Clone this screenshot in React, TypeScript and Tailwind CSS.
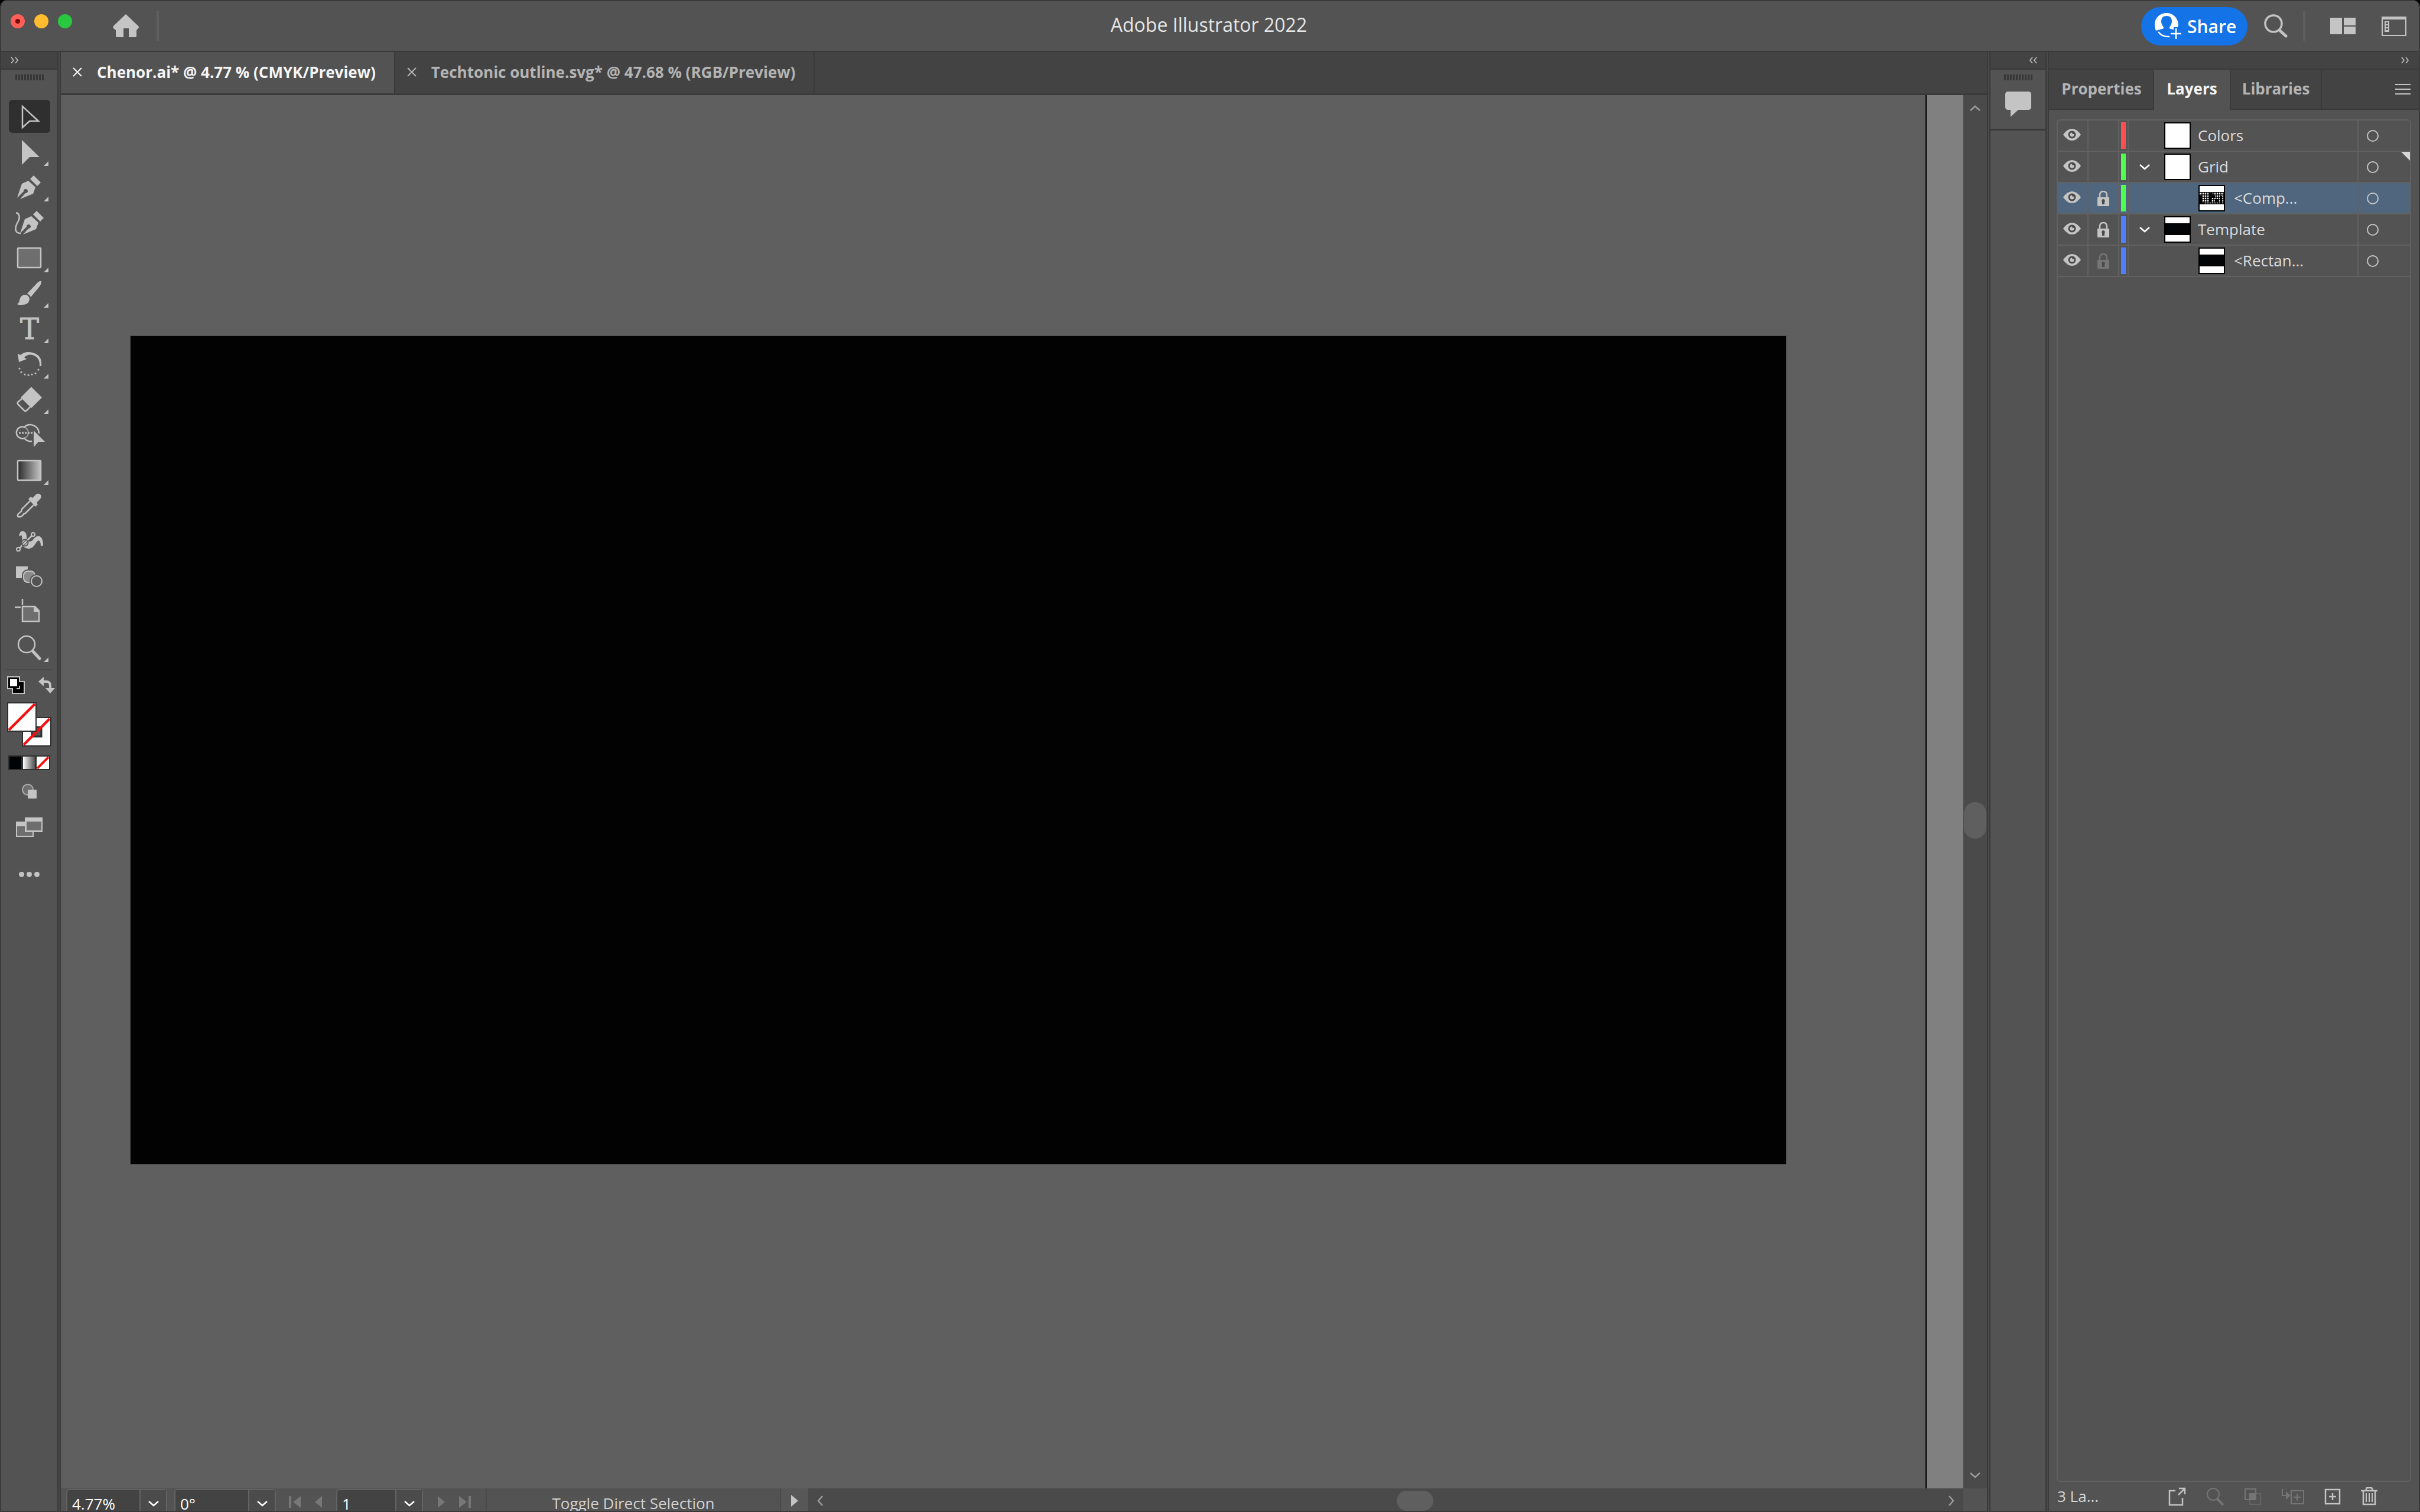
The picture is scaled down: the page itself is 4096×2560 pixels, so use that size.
import type { ReactNode } from "react";

const ICON = "#c4c4c4";

const Nib = () => (
  <>
    <path fill={ICON} d="M14 46 22 22 33 17 45 28 41 39 19 48 28 38a3.5 3.5 0 1 0-3-3z" />
    <path fill={ICON} d="M42 8 54 20 48 26 36 14z" />
  </>
);

const tools: { name: string; more?: boolean; icon: ReactNode }[] = [
  {
    name: "Selection",
    icon: <path d="M23 11V47L35 36H50z" fill="none" stroke={ICON} strokeWidth="2.5" />,
  },
  {
    name: "Direct Selection",
    more: true,
    icon: <path d="M22 8V50L35 37H52z" fill={ICON} />,
  },
  { name: "Pen", more: true, icon: <Nib /> },
  {
    name: "Curvature",
    icon: (
      <>
        <g transform="translate(5 0)">
          <Nib />
        </g>
        <path
          d="M12 11C19 13 19 20 15 27C10 36 9 46 20 46"
          fill="none"
          stroke={ICON}
          strokeWidth="2.5"
        />
      </>
    ),
  },
  {
    name: "Rectangle",
    more: true,
    icon: <rect x="15" y="11" width="39" height="33" rx="1" fill="#6e6e6e" stroke={ICON} strokeWidth="2.5" />,
  },
  {
    name: "Paintbrush",
    more: true,
    icon: (
      <>
        <path d="M31 28 49 9Q55 5 55 8Q55 12 52 16L37 34Q35 30 31 28z" fill={ICON} />
        <path d="M14 46Q18 43 18 39Q20 30 28 30Q34 31 35 37Q34 47 23 47Q17 48 14 46z" fill={ICON} />
      </>
    ),
  },
  {
    name: "Type",
    more: true,
    icon: (
      <text x="35" y="45" textAnchor="middle" fontFamily="DejaVu Serif, serif" fontSize="48" fill={ICON} stroke={ICON}>
        T
      </text>
    ),
  },
  {
    name: "Rotate",
    more: true,
    icon: (
      <>
        <path d="M15 10 17 24 30 19 26 16Q32 10 40 12Q53 16 52 31H55Q57 12 40 8Q28 5 20 12z" fill={ICON} />
        <g fill={ICON}>
          <circle cx="18" cy="35" r="1.6" />
          <circle cx="21" cy="41" r="1.6" />
          <circle cx="27" cy="45" r="1.6" />
          <circle cx="33" cy="46" r="1.6" />
          <circle cx="39" cy="45" r="1.6" />
          <circle cx="45" cy="43" r="1.6" />
          <circle cx="50" cy="37" r="1.6" />
        </g>
      </>
    ),
  },
  {
    name: "Eraser",
    more: true,
    icon: (
      <>
        <path d="M38 6 56 24 38 42 20 24z" fill={ICON} />
        <path d="M22 26 15 32Q14 34 16 36L26 46Q28 48 30 46L36 40" fill="none" stroke={ICON} strokeWidth="2.5" />
      </>
    ),
  },
  {
    name: "Shape Builder",
    icon: (
      <>
        <path d="M26 14a10 10 0 0 1 0 19" fill="none" stroke="#8f8f8f" strokeWidth="2.5" />
        <path
          d="M51 25A15 15 0 0 0 26 14A10 10 0 1 0 26 33Q31 39 39 38"
          fill="none"
          stroke={ICON}
          strokeWidth="2.5"
        />
        <path d="M17 24H40" stroke={ICON} strokeWidth="3" strokeDasharray="3 2" />
        <path d="M42 20V48L50 39H61z" fill={ICON} />
      </>
    ),
  },
  {
    name: "Gradient",
    more: true,
    icon: (
      <>
        <defs>
          <linearGradient id="toolGradient">
            <stop offset="0" stopColor="#2b2b2b" />
            <stop offset="1" stopColor={ICON} />
          </linearGradient>
        </defs>
        <rect x="15" y="11" width="39" height="33" rx="1" fill="url(#toolGradient)" stroke={ICON} strokeWidth="2.5" />
      </>
    ),
  },
  {
    name: "Eyedropper",
    icon: (
      <>
        <path
          d="M36 19 22 33Q21 35 21 37Q14 41 15 45Q18 48 23 44Q24 41 28 40L42 26"
          fill="none"
          stroke={ICON}
          strokeWidth="2.5"
        />
        <path d="M33 16 37 12 40 14 46 8Q51 5 54 9Q56 13 52 17L47 22 49 25 45 29z" fill={ICON} />
      </>
    ),
  },
  {
    name: "Puppet Warp",
    icon: (
      <>
        <path
          d="M17 19Q18 10 24 10Q30 12 30 20Q31 28 36 28Q40 27 43 22Q47 18 52 19Q58 21 58 35L54 35Q54 27 50 26Q47 28 44 33Q40 40 33 40Q23 39 22 30Q23 19 21 17z"
          fill={ICON}
        />
        <path d="M18 39 39 18" stroke="#535353" strokeWidth="5" />
        <path d="M18 39 39 18" stroke={ICON} strokeWidth="2.5" />
        <circle cx="27" cy="30" r="5.5" fill="none" stroke="#535353" strokeWidth="2" />
        <circle cx="41" cy="16" r="3" fill="#535353" stroke={ICON} strokeWidth="2" />
        <circle cx="16" cy="41" r="3" fill="#535353" stroke={ICON} strokeWidth="2" />
      </>
    ),
  },
  {
    name: "Blend",
    icon: (
      <>
        <path d="M12 10H32V30H12z" fill={ICON} />
        <rect x="25" y="18" width="19" height="19" rx="7" fill="#8b8b8b" stroke="#535353" strokeWidth="6" />
        <rect x="25" y="18" width="19" height="19" rx="7" fill="#8b8b8b" stroke={ICON} strokeWidth="2" />
        <circle cx="47" cy="35" r="9" fill="#535353" stroke="#535353" strokeWidth="6" />
        <circle cx="47" cy="35" r="9" fill="#535353" stroke={ICON} strokeWidth="2" />
      </>
    ),
  },
  {
    name: "Artboard",
    icon: (
      <>
        <path d="M23 5V15M10 19H20" stroke={ICON} strokeWidth="2.5" />
        <path d="M23 18H44L51 25V43H23z" fill="#6e6e6e" stroke={ICON} strokeWidth="2.5" />
        <path d="M42 18V27H51V25L44 18z" fill={ICON} />
      </>
    ),
  },
  {
    name: "Zoom",
    more: true,
    icon: (
      <>
        <circle cx="30" cy="22" r="14" fill="none" stroke={ICON} strokeWidth="2.5" />
        <path d="M41 34 52 46" stroke={ICON} strokeWidth="5" strokeLinecap="round" />
      </>
    ),
  },
];

type Layer = {
  name: string;
  color: string;
  lock?: "on" | "inherited";
  open?: boolean;
  child?: boolean;
  selected?: boolean;
  current?: boolean;
  thumb: "blank" | "grid" | "bar";
};

const layers: Layer[] = [
  { name: "Colors", color: "bg-[#ff4f52]", thumb: "blank" },
  { name: "Grid", color: "bg-[#4fff4f]", open: true, current: true, thumb: "blank" },
  { name: "<Comp...", color: "bg-[#4fff4f]", lock: "on", child: true, selected: true, thumb: "grid" },
  { name: "Template", color: "bg-[#4f80ff]", lock: "on", open: true, thumb: "bar" },
  { name: "<Rectan...", color: "bg-[#4f80ff]", lock: "inherited", child: true, thumb: "bar" },
];

const Chevrons = ({ flip = false }: { flip?: boolean }) => (
  <svg width="14" height="12" viewBox="0 0 14 12" className={flip ? "rotate-180" : ""}>
    <path d="M1 1 5 6 1 11M8 1 12 6 8 11" fill="none" stroke="#c4c4c4" strokeWidth="1.6" />
  </svg>
);

const Chevron = ({ className = "" }: { className?: string }) => (
  <svg width="20" height="12" viewBox="0 0 20 12" className={className}>
    <path d="M2 2 10 9 18 2" fill="none" stroke="currentColor" strokeWidth="2.5" />
  </svg>
);

const Grip = () => (
  <svg width="48" height="10" viewBox="0 0 48 10" shapeRendering="crispEdges">
    <path d="M0 5H48" stroke="#363636" strokeWidth="10" strokeDasharray="3 2" />
  </svg>
);

const Divider = () => <span className="h-[50px] w-1 bg-[#5f5f5f]" />;

const Gutter = () => <div className="w-1.5 shrink-0 border-x-2 border-[#3a3a3a] bg-[#4a4a4a]" />;

const TitleBar = () => (
  <header className="grid h-[88px] shrink-0 grid-cols-[1fr_auto_1fr] items-center border-y-2 border-[#3a3a3a] bg-[#535353]">
    <div className="flex items-center pl-4">
      <div className="flex gap-4 pb-4">
        <button aria-label="Close" className="flex size-6 items-center justify-center rounded-full bg-[#ff5f57]">
          <span className="size-2 rounded-full bg-[#7a0a05]" />
        </button>
        <button aria-label="Minimize" className="size-6 rounded-full bg-[#febc2e]" />
        <button aria-label="Full screen" className="size-6 rounded-full bg-[#28c840]" />
      </div>
      <button aria-label="Home" className="ml-[69px]">
        <svg width="44" height="40" viewBox="0 0 44 40">
          <path
            fill={ICON}
            d="M22 0 43 20Q45 22 43 24L40 27V37Q40 39 38 39H27V24H18V39H7Q5 39 5 37V27L1 24Q0 22 1 20z"
          />
        </svg>
      </button>
      <span className="ml-[30px] flex">
        <Divider />
      </span>
    </div>
    <h1 className="pr-1 pb-1 text-[32px] leading-10 text-[#e6e6e6]">Adobe Illustrator 2022</h1>
    <div className="flex items-center justify-end pr-[21px]">
      <button className="flex h-[65px] w-[180px] items-center gap-2.5 rounded-full bg-[#1473e6] pl-[22px] text-[30px] font-semibold text-white">
        <svg width="46" height="46" viewBox="0 0 46 46">
          <path
            fill="#fff"
            d="M21 1C9 1 1 10 1 21C1 25 2 28 3 31Q9 29 14 28Q17 27 16 25Q12 20 12 15Q12 6 21 6T30 15Q30 20 26 25Q25 27 28 28L33 29V25H40Q41 22 41 20C40 9 32 1 21 1z"
          />
          <path d="M7 33Q14 42 26 41M37 27V45M28 36H46" fill="none" stroke="#fff" strokeWidth="2.5" />
        </svg>
        Share
      </button>
      <button aria-label="Search" className="ml-7">
        <svg width="40" height="40" viewBox="0 0 40 40">
          <circle cx="16" cy="16" r="14" fill="none" stroke={ICON} strokeWidth="3.5" />
          <path d="M26 27 37 37" stroke={ICON} strokeWidth="5" strokeLinecap="round" />
        </svg>
      </button>
      <span className="ml-[26px] flex">
        <Divider />
      </span>
      <button aria-label="Arrange documents" className="ml-[42px]">
        <svg width="43" height="28" viewBox="0 0 43 28">
          <path fill={ICON} d="M0 0H20V28H0zM23 0H43V13H23zM23 15H43V28H23z" />
        </svg>
      </button>
      <button aria-label="Switch workspace" className="ml-11">
        <svg width="42" height="33" viewBox="0 0 42 33">
          <path fill="none" stroke={ICON} strokeWidth="2" d="M1 1H41V32H1z" />
          <path fill={ICON} d="M0 0H42V5H0zM5 8H13V26H5z" />
          <path fill="#535353" d="M7 10H11V13H7zM7 15H11V18H7zM7 20H11V23H7z" />
        </svg>
      </button>
    </div>
  </header>
);

const Toolbar = () => (
  <aside className="flex w-[95px] shrink-0 flex-col bg-[#535353]">
    <div className="flex h-[30px] shrink-0 items-center border-b-2 border-[#3a3a3a] bg-[#434343] pl-4">
      <Chevrons />
    </div>
    <div className="mt-2 flex h-[43px] justify-center">
      <Grip />
    </div>
    <div className="flex flex-col items-center gap-1">
      {tools.map((tool, i) => (
        <button
          key={tool.name}
          aria-label={tool.name}
          className={i === 0 ? "h-14 w-[70px] rounded-md bg-[#2f2f2f]" : "h-14 w-[70px]"}
        >
          <svg width="70" height="56" viewBox="0 0 70 56" className="overflow-visible">
            {tool.icon}
            {tool.more && <path d="M59 52 67 44V52z" fill={ICON} />}
          </svg>
        </button>
      ))}
    </div>
    <div className="mx-2 mt-2 h-0.5 bg-[#4a4a4a]" />
    <div className="mt-2.5 flex justify-between pr-1 pl-2.5">
      <button aria-label="Default fill and stroke">
        <svg width="30" height="30" viewBox="0 0 30 30">
          <path fill={ICON} d="M0 0H22V8H30V30H8V22H0z" />
          <path fill="#000" d="M2 2H20V20H2zM10 20H20V10H28V28H10z" />
          <path fill="#fff" d="M5 5H17V17H5z" />
          <path fill="none" stroke="#c4c4c4" strokeWidth="2" d="M21 16V21H16" />
        </svg>
      </button>
      <button aria-label="Swap fill and stroke">
        <svg width="28" height="30" viewBox="0 0 28 30">
          <path d="M7 9H13Q20 9 20 16V21" fill="none" stroke={ICON} strokeWidth="4" />
          <path fill={ICON} d="M0 9 9 1V17zM12 20H28L20 29z" />
        </svg>
      </button>
    </div>
    <button aria-label="Fill and stroke" className="mt-[14px] ml-2.5 w-[75px]">
      <svg width="75" height="75" viewBox="0 0 75 75">
        <path fill="#fff" stroke="#2f2f2f" strokeWidth="2" d="M26 26H74V74H26z" />
        <path fill="#535353" stroke="#2f2f2f" strokeWidth="3" d="M42 42H58V58H42z" />
        <path stroke="#f60d0d" strokeWidth="4.5" d="M28 72 72 28" />
        <path fill="#fff" stroke="#2f2f2f" strokeWidth="2" d="M1 1H49V49H1z" />
        <path stroke="#f60d0d" strokeWidth="4.5" d="M3 47 47 3" />
      </svg>
    </button>
    <div className="mt-[15px] ml-3 flex h-[25px] w-[71px] gap-[3px] bg-[#2f2f2f] p-0.5">
      <button aria-label="Color" className="flex-1 bg-[#020304]" />
      <button aria-label="Gradient fill" className="flex-1 bg-linear-to-r from-white to-[#535353]" />
      <button aria-label="None" className="flex-1">
        <svg width="21" height="21" viewBox="0 0 21 21">
          <path fill="#fff" d="M0 0H21V21H0z" />
          <path stroke="#f60d0d" strokeWidth="4" d="M1 20 20 1" />
        </svg>
      </button>
    </div>
    <button aria-label="Drawing modes" className="mt-[23px] ml-[35px] w-[26px]">
      <svg width="26" height="26" viewBox="0 0 26 26">
        <circle cx="10" cy="10" r="9" fill="#6e6e6e" stroke="#b0b0b0" strokeWidth="2" />
        <rect x="10" y="10" width="15" height="15" rx="1" fill={ICON} />
      </svg>
    </button>
    <button aria-label="Screen mode" className="mt-[31px] ml-[25px] w-[45px]">
      <svg width="45" height="33" viewBox="0 0 45 33">
        <path fill={ICON} d="M0 7H30V33H0z" />
        <path fill="#6e6e6e" d="M2 15H28V31H2z" />
        <path fill={ICON} d="M15 0H45V25H15z" />
        <path fill="#6e6e6e" d="M18 7H43V22H18z" />
      </svg>
    </button>
    <button aria-label="Edit toolbar" className="mt-[59px] ml-[30px] flex gap-1">
      <span className="size-[9px] rounded-full bg-[#c4c4c4]" />
      <span className="size-[9px] rounded-full bg-[#c4c4c4]" />
      <span className="size-[9px] rounded-full bg-[#c4c4c4]" />
    </button>
  </aside>
);

const CloseIcon = () => (
  <svg width="16" height="16" viewBox="0 0 16 16">
    <path d="M1 1 15 15M15 1 1 15" stroke="currentColor" strokeWidth="2" />
  </svg>
);

const DocumentTabs = () => (
  <nav className="flex h-[73px] shrink-0 border-b-3 border-[#3a3a3a] bg-[#434343] text-[26px] font-bold">
    <div className="flex items-center gap-[25px] border-r-2 border-[#3a3a3a] bg-[#535353] pr-[31px] pb-0.5 pl-5 text-[#f5f5f5]">
      <button aria-label="Close Chenor.ai">
        <CloseIcon />
      </button>
      <a href="#chenor">Chenor.ai* @ 4.77 % (CMYK/Preview)</a>
    </div>
    <div className="flex items-center gap-[25px] border-r-2 border-[#3a3a3a] pr-[31px] pb-0.5 pl-5 text-[#b4b4b4]">
      <button aria-label="Close Techtonic outline.svg">
        <CloseIcon />
      </button>
      <a href="#techtonic">Techtonic outline.svg* @ 47.68 % (RGB/Preview)</a>
    </div>
  </nav>
);

const Field = ({ label, value, className }: { label: string; value: string; className: string }) => (
  <div className={`mt-px flex h-[50px] shrink-0 rounded-md border-2 border-[#636363] bg-[#434343] ${className}`}>
    <input aria-label={label} defaultValue={value} className="w-0 flex-1 bg-transparent px-2 text-[26px] text-white outline-none" />
    <button
      aria-label={`${label} presets`}
      className="flex w-[45px] items-center justify-center border-l-2 border-[#636363] bg-[#4b4b4b] text-white"
    >
      <Chevron />
    </button>
  </div>
);

const StatusBar = () => (
  <footer className="flex h-[38px] shrink-0 items-start overflow-hidden bg-[#535353] pl-[9px]">
    <Field label="Zoom level" value="4.77%" className="w-[171px]" />
    <Field label="Rotate view" value="0°" className="ml-3 w-[172px]" />
    <div className="flex w-[102px] items-center gap-6 pt-[13px] pl-[22px]">
      <button aria-label="First artboard">
        <svg width="20" height="20" viewBox="0 0 20 20">
          <path fill="#777" d="M0 0H4V20H0zM20 0V20L7 10z" />
        </svg>
      </button>
      <button aria-label="Previous artboard">
        <svg width="12" height="20" viewBox="0 0 12 20">
          <path fill="#777" d="M12 0V20L0 10z" />
        </svg>
      </button>
    </div>
    <Field label="Artboard" value="1" className="w-[147px]" />
    <div className="flex w-[106px] items-center gap-6 pt-[13px] pl-[25px]">
      <button aria-label="Next artboard">
        <svg width="12" height="20" viewBox="0 0 12 20">
          <path fill="#777" d="M0 0V20L12 10z" />
        </svg>
      </button>
      <button aria-label="Last artboard">
        <svg width="20" height="20" viewBox="0 0 20 20">
          <path fill="#777" d="M16 0H20V20H16zM0 0V20L13 10z" />
        </svg>
      </button>
    </div>
    <p className="flex h-[38px] w-[500px] shrink-0 items-end justify-center border-x-2 border-[#4a4a4a] text-[26px] leading-[26px] text-[#d2d2d2]">
      Toggle Direct Selection
    </p>
    <button aria-label="Status options" className="flex h-[38px] w-[46px] shrink-0 items-center justify-center bg-[#575757] pt-1">
      <svg width="12" height="20" viewBox="0 0 12 20">
        <path fill={ICON} d="M0 0V20L12 10z" />
      </svg>
    </button>
    <div className="flex h-[38px] flex-1 items-center justify-between bg-[#4a4a4a] px-2.5 pt-1 text-[#9c9c9c]">
      <button aria-label="Scroll left" className="flex w-5 justify-center">
        <Chevron className="rotate-90" />
      </button>
      <span className="ml-[70px] h-[34px] w-[62px] rounded-full bg-[#5f5f5f]" />
      <button aria-label="Scroll right" className="-ml-7 flex w-5 justify-center">
        <Chevron className="-rotate-90" />
      </button>
    </div>
    <div className="h-[38px] w-10 shrink-0" />
  </footer>
);

const Workspace = () => (
  <main className="flex min-w-0 flex-1 flex-col">
    <DocumentTabs />
    <div className="flex min-h-0 flex-1">
      <div className="relative flex-1 overflow-hidden bg-[#5f5f5f]">
        <div className="absolute top-[408px] left-[118px] h-[1402px] w-[2802px] bg-[#020202] outline outline-[#4f4f4f]" />
      </div>
      <div className="w-16 shrink-0 border-l-2 border-black bg-[#808080]" />
      <div className="flex w-10 shrink-0 flex-col items-center justify-between bg-[#4a4a4a] py-4 text-[#9c9c9c]">
        <button aria-label="Scroll up">
          <Chevron className="rotate-180" />
        </button>
        <span className="mt-[97px] h-[62px] w-[38px] rounded-[19px] bg-[#5f5f5f]" />
        <button aria-label="Scroll down">
          <Chevron />
        </button>
      </div>
    </div>
    <StatusBar />
  </main>
);

const Dock = () => (
  <aside className="flex w-[93px] shrink-0 flex-col bg-[#535353]">
    <div className="flex h-[30px] shrink-0 items-center justify-end border-b-2 border-[#3a3a3a] bg-[#434343] pr-3.5">
      <Chevrons flip />
    </div>
    <div className="flex h-[103px] flex-col items-center gap-[19px] border-b-3 border-[#3a3a3a] pt-2">
      <Grip />
      <button aria-label="Comments">
        <svg width="44" height="44" viewBox="0 0 44 44">
          <path fill={ICON} d="M5 0H39Q44 0 44 5V26Q44 31 39 31H22L9 43V31H5Q0 31 0 26V5Q0 0 5 0z" />
        </svg>
      </button>
    </div>
  </aside>
);

const EyeIcon = () => (
  <svg width="30" height="20" viewBox="0 0 30 20">
    <path fill={ICON} d="M0 10Q7 0 15 0T30 10Q23 20 15 20T0 10z" />
    <circle cx="15" cy="10" r="6.5" fill="#4a4a4a" />
    <circle cx="15" cy="10" r="3.5" fill={ICON} />
    <circle cx="17" cy="7" r="2" fill="#4a4a4a" />
  </svg>
);

const LockIcon = ({ dim }: { dim: boolean }) => (
  <svg width="20" height="26" viewBox="0 0 20 26" className={dim ? "text-[#757575]" : "text-[#c4c4c4]"}>
    <path d="M4 12V8Q4 1 10 1T16 8V12" fill="none" stroke="currentColor" strokeWidth="2.5" />
    <rect y="11" width="20" height="15" rx="1" fill="currentColor" />
    <path d="M10 14a3 3 0 0 1 2 5V23H8V19a3 3 0 0 1 2-5z" fill="#4a4a4a" />
  </svg>
);

const Thumb = ({ kind }: { kind: Layer["thumb"] }) => (
  <svg width="45" height="45" viewBox="0 0 45 45" className="shrink-0">
    <rect x="1" y="1" width="43" height="43" fill="#fff" stroke="#000" strokeWidth="2" />
    {kind === "bar" && <path fill="#030405" d="M2 12H43V32H2z" />}
    {kind === "grid" && (
      <>
        <path
          d="M2 13H43M2 17H43M2 21H43M2 25H43M2 29H43M2 32H43M6 12V33M10 12V33M14 12V33M18 12V33M22 12V33M26 12V33M30 12V33M34 12V33M38 12V33M42 12V33"
          stroke="#000"
          strokeWidth="1.6"
        />
        <path fill="#000" d="M2 18H6V30H10V33H2zM18 14H24V18H28V22H22V30H18zM28 24H34V30H28zM36 19H40V32H36z" />
      </>
    )}
  </svg>
);

const LayerRow = ({ layer }: { layer: Layer }) => (
  <li
    className={`flex h-[53px] items-stretch border-b-2 border-[#616161] ${layer.selected ? "bg-[#50667e]" : ""}`}
  >
    <button aria-label={`Show ${layer.name}`} className="flex w-[52px] items-center justify-center border-r-2 border-[#616161] pr-0.5 pb-1">
      <EyeIcon />
    </button>
    <button aria-label={`Lock ${layer.name}`} className="flex w-[52px] items-center justify-center border-r-2 border-[#616161]">
      {layer.lock && <LockIcon dim={layer.lock === "inherited"} />}
    </button>
    <div className="flex w-4 items-center justify-center border-r-2 border-[#616161]">
      <span className={`h-[45px] w-2 ${layer.color}`} />
    </div>
    <div className={`flex min-w-0 flex-1 items-center ${layer.child ? "pl-[118px]" : "pl-[17px]"}`}>
      {!layer.child && (
        <span className="flex w-[43px] text-white">
          {layer.open && (
            <button aria-label={`Collapse ${layer.name}`}>
              <Chevron />
            </button>
          )}
        </span>
      )}
      <Thumb kind={layer.thumb} />
      <span className={layer.child ? "ml-[15px]" : "ml-3"}>{layer.name}</span>
    </div>
    <div className="flex w-[89px] justify-between border-l-2 border-[#616161] pl-[13px]">
      <button aria-label={`Target ${layer.name}`}>
        <svg width="22" height="22" viewBox="0 0 22 22">
          <circle cx="11" cy="11" r="9" fill="none" stroke={ICON} strokeWidth="2" />
        </svg>
      </button>
      {layer.current && (
        <svg width="15" height="15" viewBox="0 0 15 15">
          <path fill="#d6d6d6" d="M0 0H15V15z" />
        </svg>
      )}
    </div>
  </li>
);

const LayersFooter = () => (
  <div className="flex h-[49px] shrink-0 items-center pr-[70px] pl-3.5 text-[26px] text-[#d6d6d6]">
    <span className="w-[188px]">3 La...</span>
    <div className="flex flex-1 items-center justify-between">
      <button aria-label="Collect for export">
        <svg width="30" height="32" viewBox="0 0 30 32" fill="none" stroke={ICON} strokeWidth="2.5">
          <path d="M12 6H2V30H24V18M18 2H28V12M28 2 17 13" />
        </svg>
      </button>
      <button aria-label="Locate object">
        <svg width="31" height="32" viewBox="0 0 31 32" fill="none" stroke="#757575">
          <circle cx="12" cy="12" r="10" strokeWidth="2" />
          <path d="M19 20 29 30" strokeWidth="4" />
        </svg>
      </button>
      <button aria-label="Make clipping mask">
        <svg width="28" height="28" viewBox="0 0 28 28">
          <path fill="none" stroke="#656565" strokeWidth="2" d="M9 9H27V27H9z" />
          <path fill="none" stroke="#757575" strokeWidth="2" d="M1 1H19V19H1z" />
          <path fill="#757575" d="M8 8H20V20H8z" />
        </svg>
      </button>
      <button aria-label="Create new sublayer">
        <svg width="38" height="28" viewBox="0 0 38 28">
          <path fill="none" stroke="#757575" strokeWidth="2" d="M1 1V12H9M16 4H37V26H16zM26 9V21M20 15H32" />
          <path fill="#757575" d="M7 5 15 12 7 19z" />
        </svg>
      </button>
      <button aria-label="Create new layer">
        <svg width="28" height="28" viewBox="0 0 28 28">
          <path fill="none" stroke={ICON} strokeWidth="2.5" d="M2 2H26V26H2zM14 8V20M8 14H20" />
        </svg>
      </button>
      <button aria-label="Delete selection">
        <svg width="28" height="31" viewBox="0 0 28 31">
          <path fill="none" stroke={ICON} strokeWidth="2.5" d="M0 6H28M9 6V3Q9 1 11 1H17Q19 1 19 3V6M4 7V29H24V7" />
          <path fill="none" stroke={ICON} strokeWidth="2" d="M9 10V25M14 10V25M19 10V25" />
        </svg>
      </button>
    </div>
  </div>
);

const LayersPanel = () => (
  <aside className="flex w-[626px] shrink-0 flex-col bg-[#535353]">
    <div className="flex h-[30px] shrink-0 items-center justify-end border-b-2 border-[#3a3a3a] bg-[#434343] pr-4">
      <Chevrons />
    </div>
    <div className="flex h-[68px] shrink-0 bg-[#434343] text-[26px] font-bold text-[#b4b4b4]">
      <button className="w-[178px] border-r-2 border-b-2 border-[#3a3a3a] pb-0.5 pl-0.5">Properties</button>
      <button className="w-[128px] bg-[#535353] pb-1 text-[#f5f5f5]">Layers</button>
      <button className="w-[156px] border-x-2 border-b-2 border-[#3a3a3a] pb-0.5">Libraries</button>
      <div className="flex flex-1 items-center justify-end border-b-2 border-[#3a3a3a] pr-3.5">
        <button aria-label="Panel menu">
          <svg width="26" height="20" viewBox="0 0 26 20">
            <path d="M0 2H26M0 10H26M0 18H26" stroke={ICON} strokeWidth="2" />
          </svg>
        </button>
      </div>
    </div>
    <ul className="mx-[13px] mt-4 flex-1 rounded-md border-2 border-[#616161] text-[26px] text-[#dcdcdc]">
      {layers.map((layer) => (
        <LayerRow key={layer.name} layer={layer} />
      ))}
    </ul>
    <LayersFooter />
  </aside>
);

export default function App() {
  return (
    <div className="bg-black">
      <div className="flex h-screen flex-col overflow-hidden rounded-t-xl border-x-2 border-b-2 border-[#3a3a3a] bg-[#3a3a3a] font-['Open_Sans','Noto_Sans',sans-serif]">
        <TitleBar />
        <div className="flex min-h-0 flex-1">
          <Toolbar />
          <Gutter />
          <Workspace />
          <Gutter />
          <Dock />
          <Gutter />
          <LayersPanel />
        </div>
      </div>
    </div>
  );
}
